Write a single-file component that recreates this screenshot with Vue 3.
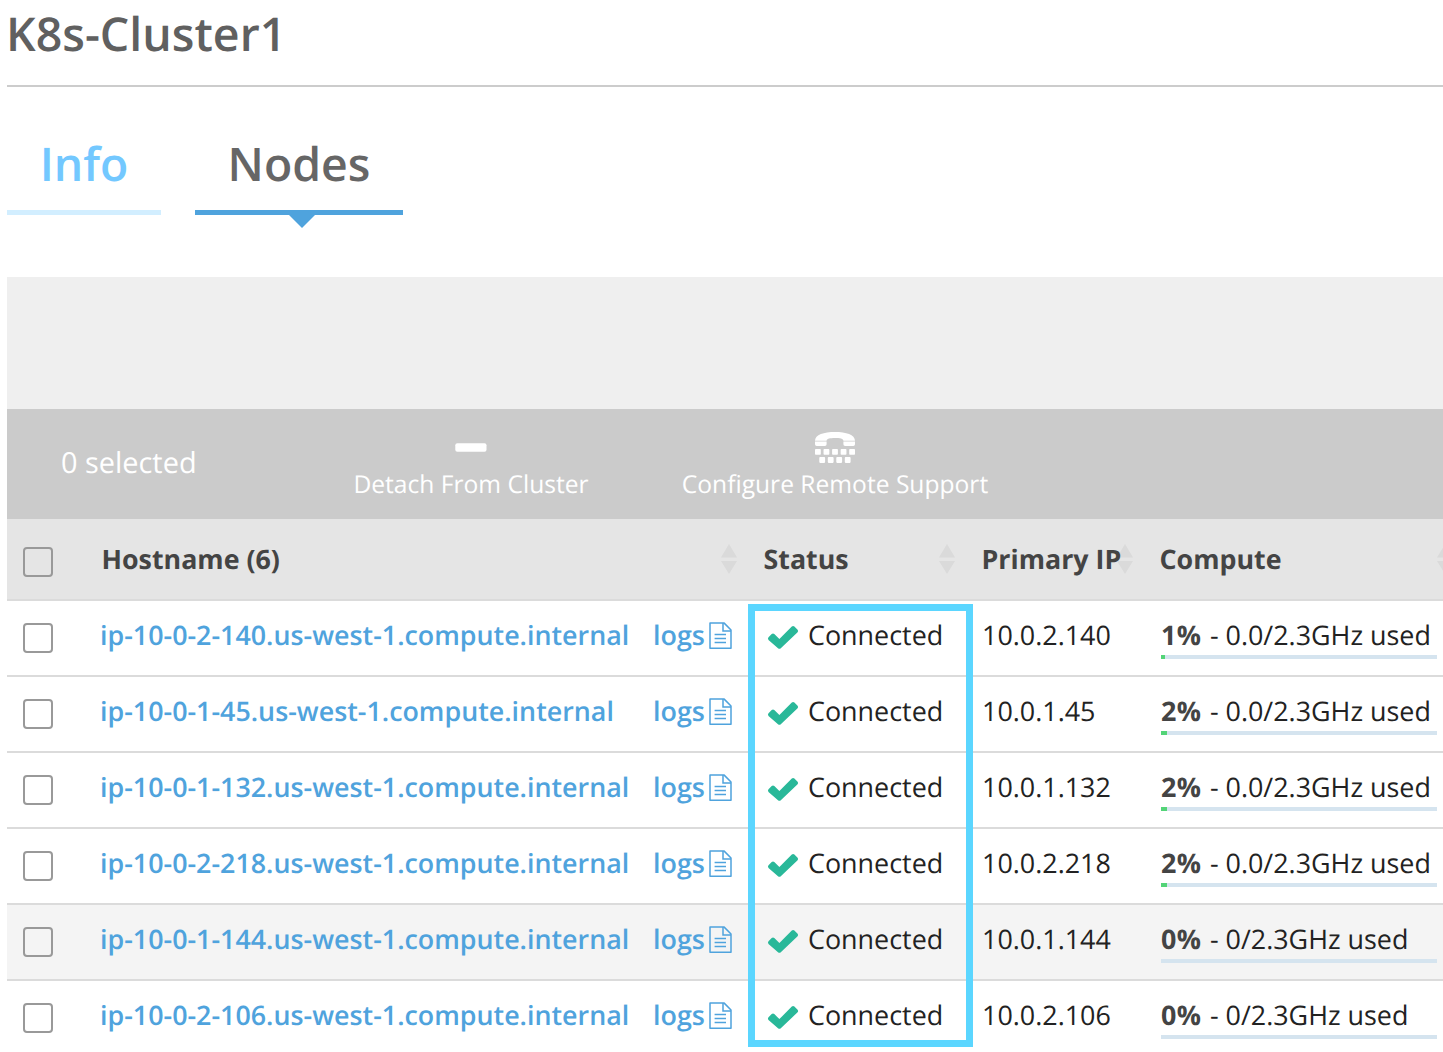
<script setup>
const columns = [
  { key: 'hostname', label: 'Hostname (6)' },
  { key: 'status', label: 'Status' },
  { key: 'ip', label: 'Primary IP' },
  { key: 'compute', label: 'Compute' },
]

const nodes = [
  { host: 'ip-10-0-2-140.us-west-1.compute.internal', ip: '10.0.2.140', pct: 1, used: '0.0/2.3GHz used', bar: 4 },
  { host: 'ip-10-0-1-45.us-west-1.compute.internal', ip: '10.0.1.45', pct: 2, used: '0.0/2.3GHz used', bar: 6 },
  { host: 'ip-10-0-1-132.us-west-1.compute.internal', ip: '10.0.1.132', pct: 2, used: '0.0/2.3GHz used', bar: 6 },
  { host: 'ip-10-0-2-218.us-west-1.compute.internal', ip: '10.0.2.218', pct: 2, used: '0.0/2.3GHz used', bar: 6 },
  { host: 'ip-10-0-1-144.us-west-1.compute.internal', ip: '10.0.1.144', pct: 0, used: '0/2.3GHz used', bar: 0, active: true },
  { host: 'ip-10-0-2-106.us-west-1.compute.internal', ip: '10.0.2.106', pct: 0, used: '0/2.3GHz used', bar: 0 },
]
</script>

<template>
  <main class="page">
    <h1 class="title">K8s-Cluster1</h1>
    <nav class="tabs">
      <a class="tab info">Info</a>
      <a class="tab nodes">Nodes<span class="caret"></span></a>
    </nav>

    <div class="filter-area"></div>

    <div class="toolbar">
      <div class="selected">0 selected</div>
      <div class="action detach">
        <svg width="32" height="34" viewBox="0 0 32 34"><rect x="0.3" y="13.2" width="31.2" height="8.6" rx="2" fill="#fff" /></svg>
        <span>Detach From Cluster</span>
      </div>
      <div class="action support">
        <svg width="40" height="34" viewBox="0 0 40 34" fill="#fff">
          <path d="M0 10.8C0 4.6 9 2 20 2S40 4.6 40 10.8H28.4C28.4 8.8 25 8.1 20 8.1S11.6 8.8 11.6 10.8Z" />
          <path d="M0 11.5H11.6V14.2Q11.6 15.9 9.9 15.9H1.7Q0 15.9 0 14.2ZM28.4 11.5H40V14.2Q40 15.9 38.3 15.9H30.1Q28.4 15.9 28.4 14.2Z" />
          <rect v-for="n in 5" :key="'a' + n" :x="(n - 1) * 8.55" y="18.9" width="5.8" height="5.8" rx="0.8" />
          <rect v-for="n in 4" :key="'b' + n" :x="4.3 + (n - 1) * 8.5" y="27.1" width="5.8" height="5.8" rx="0.8" />
        </svg>
        <span>Configure Remote Support</span>
      </div>
    </div>

    <section class="table">
      <div class="row head">
        <div class="check"><span class="box"></span></div>
        <div v-for="c in columns" :key="c.key" class="th" :class="c.key">
          <svg class="sort" width="18" height="30" viewBox="0 0 18 30" fill="#dadada">
            <path d="M9 0L17 13.6H1ZM1 17H17L9 30Z" />
          </svg>
          <span>{{ c.label }}</span>
        </div>
      </div>
      <div v-for="n in nodes" :key="n.host" class="row" :class="{ active: n.active }">
        <div class="check"><span class="box"></span></div>
        <div class="host"><a>{{ n.host }}</a></div>
        <div class="logs">
          <a>logs</a>
          <svg width="24" height="28" viewBox="0 0 24 28" fill="none" stroke="#4fa3dd" stroke-width="1.5">
            <path d="M1 1.1H15.2L22 8V26.2H1Z" stroke-linejoin="round" />
            <path d="M14 1.1V9.1H22" />
            <path d="M5.6 12.4H17M5.6 16.4H17M5.6 20.4H17" />
          </svg>
        </div>
        <div class="state">
          <svg width="32" height="26" viewBox="0 0 32 26">
            <path d="M1.5 13.3L4.7 10.1Q6 9 7.3 10.1L12.4 15.1L24.8 2.5Q26.1 1.4 27.4 2.5L30.6 5.7Q31.6 7 30.6 8.3L13.8 24.2Q12.4 25.4 11 24.2L1.5 15.9Q.4 14.6 1.5 13.3Z" fill="#29b899" />
          </svg>
          <span>Connected</span>
        </div>
        <div class="addr">{{ n.ip }}</div>
        <div class="usage">
          <p><b>{{ n.pct }}%</b> - {{ n.used }}</p>
          <div class="meter"><i :style="{ width: n.bar + 'px' }"></i></div>
        </div>
      </div>
      <div class="highlight"></div>
    </section>
  </main>
</template>

<style>
body { background: #fff; overflow: hidden; }
</style>

<style scoped>
.page {
  box-sizing: border-box;
  width: 1443px;
  height: 1052px;
  padding-left: 7px;
  overflow: hidden;
  font-family: "Open Sans", sans-serif;
  font-size: 26.9px;
  text-rendering: geometricPrecision;
  color: #222;
}
.title {
  box-sizing: border-box;
  height: 87px;
  margin: 0;
  text-indent: -1px;
  border-bottom: 2px solid #ccc;
  font-size: 46.5px;
  font-weight: 600;
  line-height: 67px;
  color: #606060;
}
.tabs {
  display: flex;
  gap: 34px;
  height: 190px;
  padding-top: 30px;
  box-sizing: border-box;
}
.tab {
  position: relative;
  box-sizing: border-box;
  height: 98px;
  border-bottom: 5px solid #d2eeff;
  font-size: 46.4px;
  font-weight: 600;
  line-height: 93px;
  text-align: center;
}
.info { width: 154px; color: #73c8ff; }
.nodes { width: 208px; border-color: #4fa3dd; color: #666; }
.caret {
  position: absolute;
  left: 93px;
  top: 97px;
  border: 14px solid transparent;
  border-top-color: #4fa3dd;
  border-bottom: 0;
}
.filter-area { height: 132px; background: #efefef; }
.toolbar {
  display: flex;
  height: 110px;
  background: #cbcbcb;
  color: #fff;
}
.selected { width: 293px; padding-left: 54px; box-sizing: border-box; font-size: 28.9px; line-height: 107px; }
.action {
  display: flex;
  flex-direction: column;
  align-items: center;
  padding-top: 21px;
  font-size: 24.6px;
  white-space: nowrap;
}
.action svg { display: block; }
.action span { line-height: 42px; }
.detach { width: 342px; }
.support { width: 386px; }
.table { position: relative; }
.row {
  display: grid;
  grid-template-columns: 93px 553px 111px 218px 179px 1fr;
  box-sizing: border-box;
  height: 76px;
  border-bottom: 2px solid #dbdbdb;
  line-height: 68px;
  white-space: nowrap;
}
.row.active { background: #f4f4f4; }
.head {
  grid-template-columns: 94px 662px 218px 178px 1fr;
  height: 82px;
  background: #e5e5e5;
  font-size: 26.8px;
  font-weight: 700;
  line-height: 80px;
  color: #444;
}
.check { padding: 22px 0 0 16px; }
.head .check { padding-top: 28px; }
.box {
  display: block;
  box-sizing: border-box;
  width: 30px;
  height: 30px;
  border: 2px solid #999;
  border-radius: 4px;
}
.th { position: relative; padding-left: 0.5px; }
.sort { position: absolute; right: 25px; top: 25px; }
.compute .sort { right: -11px; }
.th span { position: relative; }
.host, .logs { color: #4fa3dd; font-weight: 600; }
.host { font-size: 26.83px; }
.logs { display: flex; }
.logs svg { margin: 21px 0 0 4px; }
.state { display: flex; padding-left: 3px; }
.state svg { margin: 23px 9px 0 0; }
.usage p { margin: 0; height: 54px; }
.usage b { margin-right: 1.5px; letter-spacing: 0.4px; color: #444; }
.meter { width: 276px; height: 4px; background: #d5e4ef; }
.meter i { display: block; height: 4px; background: #53d477; }
.highlight {
  position: absolute;
  left: 741px;
  top: 85px;
  box-sizing: border-box;
  width: 225px;
  height: 443px;
  border: 7px solid #5bd6ff;
}
</style>
